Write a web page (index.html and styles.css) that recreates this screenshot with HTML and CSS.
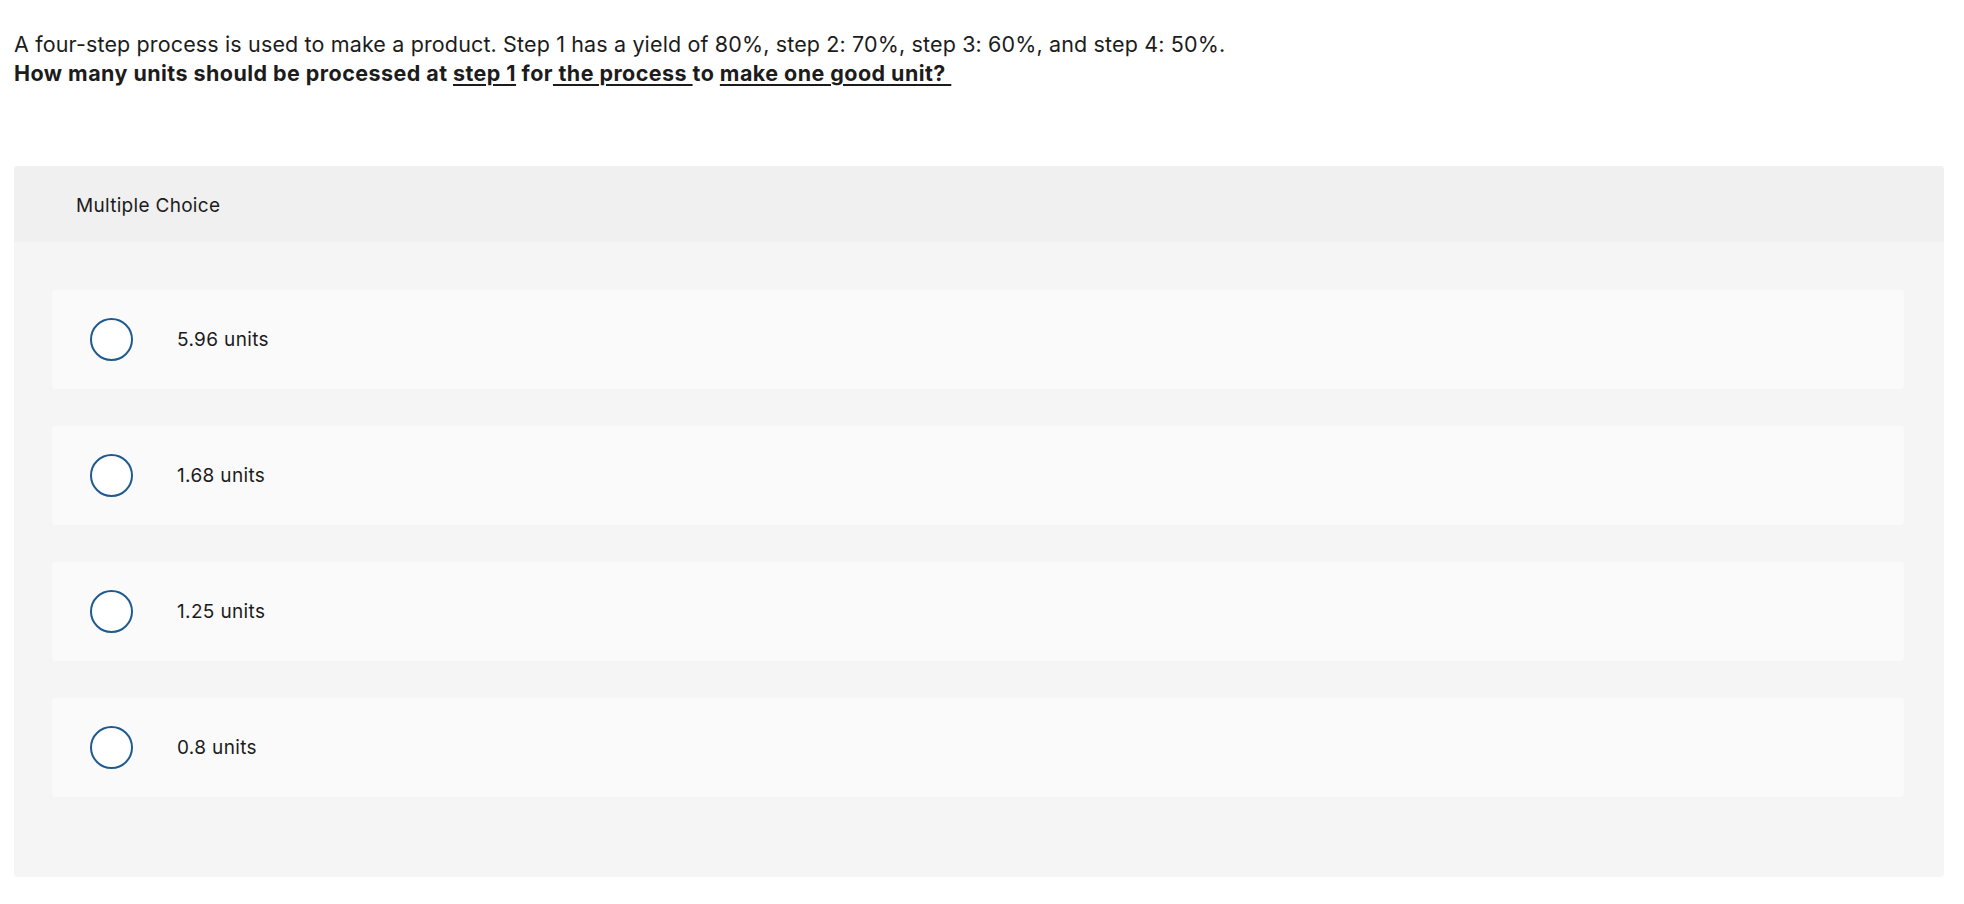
FILE: index.html
```html
<!DOCTYPE html>
<html>
<head>
<meta charset="utf-8">
<link rel="stylesheet" href="styles.css">
</head>
<body>
<div class="question">
  <p class="prompt">A four-step process is used to make a product. Step 1 has a yield of 80%, step 2: 70%, step 3: 60%, and step 4: 50%.</p>
  <p class="ask">How many units should be processed at <u>step 1</u> for<u> the process </u>to <u>make one good unit?&nbsp;</u></p>
</div>
<section class="panel">
  <header class="panel-head">Multiple Choice</header>
  <div class="choices">
    <label class="choice"><span class="radio"></span><span class="choice-text">5.96 units</span></label>
    <label class="choice"><span class="radio"></span><span class="choice-text">1.68 units</span></label>
    <label class="choice"><span class="radio"></span><span class="choice-text">1.25 units</span></label>
    <label class="choice"><span class="radio"></span><span class="choice-text">0.8 units</span></label>
  </div>
</section>
</body>
</html>
```
FILE: styles.css
```css
html, body {
  margin: 0;
  background: #ffffff;
}
body {
  font-family: Inter, "Noto Sans", sans-serif;
  color: #1c1c1c;
}
.question {
  padding: 30px 0 0 14px;
}
.question p {
  margin: 0;
  font-size: 21.5px;
  line-height: 29px;
}
.prompt {
  letter-spacing: 0.14px;
}
.ask {
  font-weight: 700;
  letter-spacing: 0.44px;
}
.ask u {
  text-decoration-thickness: 2px;
  text-underline-offset: 3px;
}
.panel {
  margin: 78px 20px 0 14px;
  background: #f5f5f5;
  border-radius: 4px;
  overflow: hidden;
}
.panel-head {
  box-sizing: border-box;
  height: 76px;
  padding: 28px 0 0 62px;
  background: #f0f0f0;
  font-size: 19px;
  line-height: 24px;
  letter-spacing: 0.3px;
}
.choices {
  display: flex;
  flex-direction: column;
  gap: 37px;
  padding: 48px 40px 80px 38px;
}
.choice {
  display: flex;
  align-items: center;
  gap: 44px;
  height: 99px;
  padding-left: 38px;
  background: #fafafa;
  border-radius: 4px;
}
.radio {
  box-sizing: border-box;
  width: 43px;
  height: 43px;
  border: 2px solid #1f5a93;
  border-radius: 50%;
  background: #ffffff;
  flex: none;
}
.choice-text {
  font-size: 19px;
  line-height: 22px;
  letter-spacing: 0.35px;
}
```
